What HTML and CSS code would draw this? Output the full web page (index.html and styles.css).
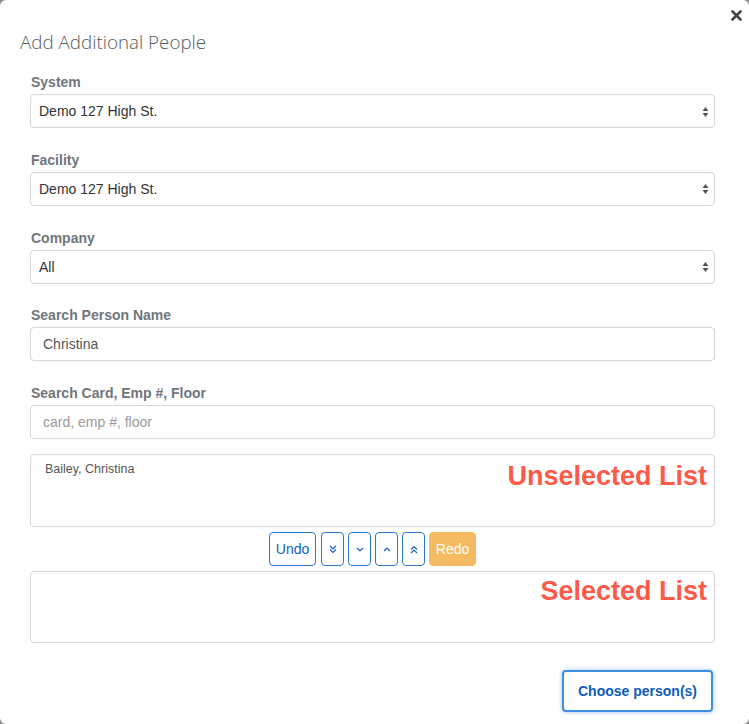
FILE: index.html
```html
<!DOCTYPE html>
<html>
<head>
<meta charset="utf-8">
<link rel="stylesheet" href="styles.css">
</head>
<body>
<div class="modal">
  <div class="modal-header">
    <h1 class="title">Add Additional People</h1>
    <button class="close" aria-label="Close">
      <svg width="11" height="11" viewBox="0 0 11 11"><path d="M1.5 1.5 L9.5 9.5 M9.5 1.5 L1.5 9.5" stroke="#444" stroke-width="2.6" stroke-linecap="round"/></svg>
    </button>
  </div>
  <div class="modal-body">
    <div class="group">
      <label class="label">System</label>
      <div class="select"><span>Demo 127 High St.</span><svg class="arrows" width="7" height="12" viewBox="0 0 7 12"><path d="M3.5 1 L6.5 5 L0.5 5 Z M3.5 11 L6.5 7 L0.5 7 Z" fill="#555"/></svg></div>
    </div>
    <div class="group">
      <label class="label">Facility</label>
      <div class="select"><span>Demo 127 High St.</span><svg class="arrows" width="7" height="12" viewBox="0 0 7 12"><path d="M3.5 1 L6.5 5 L0.5 5 Z M3.5 11 L6.5 7 L0.5 7 Z" fill="#555"/></svg></div>
    </div>
    <div class="group">
      <label class="label">Company</label>
      <div class="select"><span>All</span><svg class="arrows" width="7" height="12" viewBox="0 0 7 12"><path d="M3.5 1 L6.5 5 L0.5 5 Z M3.5 11 L6.5 7 L0.5 7 Z" fill="#555"/></svg></div>
    </div>
    <div class="group">
      <label class="label">Search Person Name</label>
      <div class="input">Christina</div>
    </div>
    <div class="group last">
      <label class="label">Search Card, Emp #, Floor</label>
      <div class="input placeholder">card, emp #, floor</div>
    </div>
    <div class="list">
      <div class="item">Bailey, Christina</div>
      <div class="annot annot-top">Unselected List</div>
    </div>
    <div class="actions">
      <button class="btn btn-text">Undo</button>
      <button class="btn btn-icon"><svg width="8" height="9" viewBox="0 0 8 9"><path d="M1 1 L4 4 L7 1 M1 4.5 L4 7.5 L7 4.5" fill="none" stroke="#1565c8" stroke-width="1.2"/></svg></button>
      <button class="btn btn-icon"><svg width="8" height="9" viewBox="0 0 8 9"><path d="M1 3 L4 6 L7 3" fill="none" stroke="#1565c8" stroke-width="1.2"/></svg></button>
      <button class="btn btn-icon"><svg width="8" height="9" viewBox="0 0 8 9"><path d="M1 6 L4 3 L7 6" fill="none" stroke="#1565c8" stroke-width="1.2"/></svg></button>
      <button class="btn btn-icon"><svg width="8" height="9" viewBox="0 0 8 9"><path d="M1 4.5 L4 1.5 L7 4.5 M1 8 L4 5 L7 8" fill="none" stroke="#1565c8" stroke-width="1.2"/></svg></button>
      <button class="btn btn-redo">Redo</button>
    </div>
    <div class="list list-selected">
      <div class="annot annot-bottom">Selected List</div>
    </div>
    <div class="footer">
      <button class="btn-choose">Choose person(s)</button>
    </div>
  </div>
</div>
</body>
</html>
```
FILE: styles.css
```css
* { box-sizing: border-box; }
html, body { margin: 0; padding: 0; }
body {
  background: #8a8a8a;
  width: 749px;
  height: 724px;
  overflow: hidden;
  font-family: "Liberation Sans", Arial, sans-serif;
}
.modal {
  background: #fff;
  width: 749px;
  height: 724px;
  border-radius: 6px;
  display: flex;
  flex-direction: column;
}
.modal-header {
  display: flex;
  justify-content: space-between;
  align-items: flex-start;
  padding: 10px 7px 0 20px;
}
.title {
  margin: 20px 0 0 0;
  font-family: "Open Sans", sans-serif;
  font-weight: 300;
  font-size: 18.8px;
  line-height: 24px;
  color: #575c60;
}
.close {
  border: 0;
  background: none;
  padding: 0;
  width: 11px;
  height: 11px;
  display: flex;
}
.modal-body {
  padding: 19px 34px 0 30px;
  display: flex;
  flex-direction: column;
}
.group {
  display: flex;
  flex-direction: column;
  margin-bottom: 22.75px;
}
.group.last { margin-bottom: 15px; }
.label {
  font-size: 14px;
  font-weight: bold;
  line-height: 18px;
  color: #6f767c;
  margin: 0 0 3px 1px;
}
.select {
  height: 34px;
  border: 1px solid #d6d6d6;
  border-radius: 4px;
  display: flex;
  align-items: center;
  justify-content: space-between;
  padding: 0 5px 0 8px;
  font-size: 14px;
  color: #333;
}
.arrows { margin-top: 1px; }
.input {
  height: 34px;
  border: 1px solid #d6d6d6;
  border-radius: 4px;
  display: flex;
  align-items: center;
  padding: 0 12px;
  font-size: 14px;
  color: #555;
}
.input.placeholder { color: #9a9a9a; }
.list {
  position: relative;
  height: 73px;
  border: 1px solid #d6d6d6;
  border-radius: 4px;
  padding: 6px 14px;
}
.item {
  font-size: 12.5px;
  line-height: 16px;
  color: #555;
}
.annot {
  position: absolute;
  right: 7px;
  font-weight: bold;
  font-size: 27px;
  line-height: 31px;
  color: #fd5a4a;
}
.annot-top { top: 6px; }
.annot-bottom { top: 4px; }
.actions {
  display: flex;
  justify-content: center;
  gap: 4px;
  margin: 5px 0 5px 0;
}
.btn {
  height: 34px;
  border-radius: 4px;
  background: #fff;
  border: 1px solid #2b78d6;
  color: #0d5fc2;
  font-family: "Liberation Sans", Arial, sans-serif;
  font-size: 14px;
  padding: 0;
  display: flex;
  align-items: center;
  justify-content: center;
}
.btn-text { width: 47px; margin-right: 1px; }
.btn-icon { width: 23px; }
.btn-redo {
  width: 47px;
  background: #f5bb62;
  border-color: #f5bb62;
  color: #fff;
}
.list-selected { height: 72px; }
.footer {
  display: flex;
  justify-content: flex-end;
  padding-top: 27px;
  padding-right: 2px;
}
.btn-choose {
  width: 151px;
  height: 42px;
  background: #fff;
  border: 2px solid #3e8ee3;
  border-radius: 4px;
  box-shadow: 0 0 4px rgba(80, 150, 230, 0.6);
  color: #0b5cc0;
  font-family: "Liberation Sans", Arial, sans-serif;
  font-weight: bold;
  font-size: 14px;
}
```
